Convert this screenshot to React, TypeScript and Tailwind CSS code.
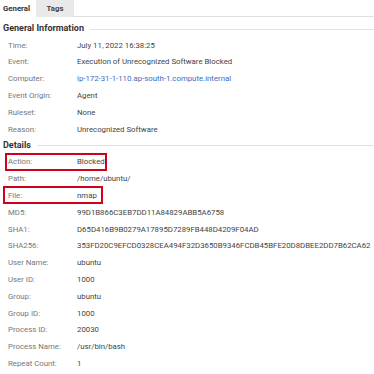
const general: [string, string, boolean?][] = [
  ["Time:", "July 11, 2022 16:38:25"],
  ["Event:", "Execution of Unrecognized Software Blocked"],
  ["Computer:", "ip-172-31-1-110.ap-south-1.compute.internal", true],
  ["Event Origin:", "Agent"],
  ["Ruleset:", "None"],
  ["Reason:", "Unrecognized Software"],
];

const details: [string, string][] = [
  ["Action:", "Blocked"],
  ["Path:", "/home/ubuntu/"],
  ["File:", "nmap"],
  ["MD5:", "99D1B866C3EB7DD11A84829ABB5A6758"],
  ["SHA1:", "D65D416B9B0279A17895D7289FB448D4209F04AD"],
  ["SHA256:", "353FD20C9EFCD0328CEA494F32D3650B9346FCDB45BFE20D8DBEE2DD7B62CA62"],
  ["User Name:", "ubuntu"],
  ["User ID:", "1000"],
  ["Group:", "ubuntu"],
  ["Group ID:", "1000"],
  ["Process ID:", "20030"],
  ["Process Name:", "/usr/bin/bash"],
  ["Repeat Count:", "1"],
];

function SectionHeader({ title }: { title: string }) {
  return (
    <div className="flex h-[16px] items-center gap-[6px] pl-[3px]">
      <span className="text-[9px] font-bold text-[#333]">{title}</span>
      <div className="h-px flex-1 bg-[#e2e2e2]" />
    </div>
  );
}

function Row({ label, value, link }: { label: string; value: string; link?: boolean }) {
  return (
    <div className="flex h-[16.8px] items-center whitespace-nowrap">
      <span className="w-[77px] shrink-0 pl-[8px] text-[#777]">{label}</span>
      <span className={link ? "text-[#3b6cc0]" : "text-[#444]"}>{value}</span>
    </div>
  );
}

export default function App() {
  return (
    <div
      className="h-[374px] w-[374px] overflow-hidden bg-white text-[7.8px]"
      style={{ fontFamily: "Roboto, 'Liberation Sans', sans-serif" }}
    >
      <div className="flex h-[17px] items-stretch">
        <div className="flex w-[36px] items-center pl-[3px] text-[7.8px] font-bold text-[#333]">
          General
        </div>
        <div className="flex w-[38px] items-center justify-center bg-[#e9e9e9] text-[7.8px] font-bold text-[#444]">
          Tags
        </div>
        <div className="flex-1 border-b border-[#e0e0e0]" />
      </div>

      <div className="mt-[4px]">
        <SectionHeader title="General Information" />
        {general.map(([l, v, link]) => (
          <Row key={l} label={l} value={v} link={link} />
        ))}
      </div>

      <div>
        <SectionHeader title="Details" />
        {details.map(([l, v], i) => (
          <div key={l} className="relative">
            <Row label={l} value={v} />
            {i === 0 && (
              <div className="pointer-events-none absolute left-[5px] top-[-1px] h-[18px] w-[102px] border-2 border-[#d0021b]" />
            )}
            {i === 2 && (
              <div className="pointer-events-none absolute left-[3px] top-[-1px] h-[18px] w-[100px] border-2 border-[#d0021b]" />
            )}
          </div>
        ))}
      </div>
    </div>
  );
}
